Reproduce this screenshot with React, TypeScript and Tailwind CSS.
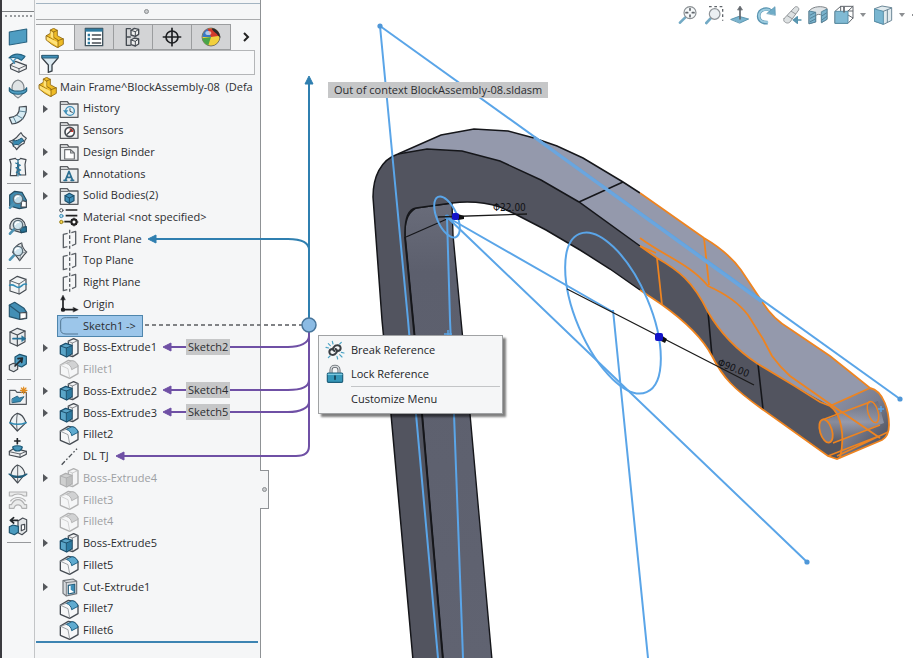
import type { ReactNode } from "react";
import clsx from "clsx";

const INK = "#454b52";
const BLUE = "#3f8fb8";
const PALE = "#b5dbea";

/** Every icon is drawn on a 60-unit grid and shown at 20px. */
function Glyph({ children, faded }: { children: ReactNode; faded?: boolean }) {
  return (
    <svg
      viewBox="0 0 60 60"
      className={clsx("size-5 shrink-0", faded && "opacity-40 grayscale")}
      fill="none"
      stroke={INK}
      strokeWidth={3.5}
      strokeLinejoin="round"
      strokeLinecap="round"
      aria-hidden="true"
    >
      {children}
    </svg>
  );
}

// ---------- feature tree icons ----------

const partIcon = (
  <g stroke="#8a6412" strokeWidth="2.5">
    <path d="M4 23l12-7V6l10-5 11 6v16l18 10v16L38 59 20 49 4 36z" fill="#eebb26" />
    <path d="M16 6l10 6v16l13 8v22M26 12l11-5M39 38l16-6M4 23l22 13" fill="none" />
    <path d="M17 9l8 5v18l-8-5zM6 26l31 16v13L6 36z" fill="#ffe27a" stroke="none" />
  </g>
);

function folder(inner: ReactNode) {
  return (
    <>
      <path d="M4 55V8h21l5 7h27v40z" fill="#eceeef" stroke="#5a5d61" strokeWidth="4" />
      <path d="M5 16h22" stroke="#5a5d61" strokeWidth="3" />
      {inner}
    </>
  );
}

const historyIcon = folder(
  <>
    <circle cx="33" cy="36" r="13" fill="#e4f3f8" stroke={BLUE} strokeWidth="4" />
    <path d="M33 29v8l7 3" strokeWidth="3" />
    <path d="M12 34l8 10 8-10z" fill={BLUE} stroke="none" />
  </>,
);
const sensorsIcon = folder(
  <>
    <circle cx="32" cy="36" r="14" fill="#fff" strokeWidth="5" />
    <path d="M32 36V25a11 11 0 0 1 11 11z" fill="#d5382f" stroke="none" />
    <path d="M24 43l14-13" strokeWidth="4" />
  </>,
);
const binderIcon = folder(
  <path d="M17 23h18l11 10v18H17zM35 23v10h11" fill="#fff" stroke="#6b6e72" strokeWidth="3.5" />,
);
const annotationsIcon = folder(
  <path d="M19 49l11-27 11 27M23 40h14M15 49h8M36 49h8" stroke="#2c6f91" strokeWidth="5" />,
);
const bodiesIcon = folder(
  <>
    <path d="M18 29l13-7 14 7v15l-14 8-13-8z" fill={BLUE} stroke="#1c4f6c" />
    <path d="M18 29l13 7 14-7M31 36v15" stroke="#1c4f6c" strokeWidth="3" />
  </>,
);

const materialIcon = (
  <>
    <circle cx="7" cy="10" r="5" fill="#fff" strokeWidth="3" />
    <circle cx="7" cy="27" r="5" fill={PALE} stroke={BLUE} strokeWidth="3" />
    <circle cx="7" cy="45" r="5" fill="#f5d44b" stroke="#9c8420" strokeWidth="3" />
    <path d="M20 9h35M20 26h35M16 44h18" stroke="#222" strokeWidth="5" strokeLinecap="butt" />
    <circle cx="45" cy="45" r="8" stroke="#222" strokeWidth="6" />
    <path d="M45 33v24M33 45h24M37 37l16 16M53 37L37 53" stroke="#222" strokeWidth="3" />
    <circle cx="45" cy="45" r="4" fill="#fff" stroke="none" />
  </>
);

const planeIcon = (
  <path
    d="M26 13L13 16v40l12-3M37 11l13-4v38l-11 5M32 2v11M32 19v11M32 36v8M32 50v9"
    stroke="#5b6066"
    strokeWidth="4"
    strokeLinecap="butt"
  />
);

const originIcon = (
  <g stroke="#1d1f22" strokeWidth="5">
    <path d="M12 14v33h34" />
    <path d="M5 17l7-14 7 14z M43 40l15 7-15 7z" fill="#1d1f22" strokeWidth="1" />
    <circle cx="12" cy="47" r="4" fill="#1d1f22" />
  </g>
);

const sketchIcon = <path d="M56 5H22C10 5 5 9 5 18v23c0 9 6 13 16 13h35" stroke="#527793" strokeWidth="3" />;

const extrudeIcon = (
  <>
    <path d="M28 9l16-7 13 6v38l-16 10-13-4z" fill="#f2f3f4" strokeWidth="4" />
    <path d="M28 10l12 5v38M40 15l16-7" stroke="#777c82" strokeWidth="2.5" />
    <path d="M4 24l16-8 19 6v25l-16 10-19-9z" fill="#5aa5c8" stroke="#1c4f6c" strokeWidth="4" />
    <path d="M24 31l13-6v20l-13 9z" fill="#2d7ca3" stroke="none" />
    <path d="M4 24l18 6 17-7M22 30v26" stroke="#1c4f6c" strokeWidth="3" />
  </>
);

const filletIcon = (
  <>
    <path d="M4 18L28 4l18 3 11 12v25L32 58 4 46z" fill="#f6f7f8" strokeWidth="4" />
    <path d="M22 13l17-8c9 1 16 7 18 17L38 32c-1-9-6-16-16-19z" fill="#5fabd0" stroke="#1f6286" strokeWidth="3" />
    <path d="M5 19l17-6M5 19l22 10 5 28" stroke="#8b9095" strokeWidth="2.5" />
  </>
);

const cutIcon = (
  <>
    <path d="M12 11l30-5 11 7v37l-31 7-10-8z" fill="#d7dadd" stroke="#70757a" />
    <path d="M22 17l31-4M22 17v39M22 17l-9-6" stroke="#70757a" strokeWidth="2.5" />
    <path d="M28 25l19-3v25l-19 4z" fill="#fff" stroke="#245f7e" />
    <path d="M35 25l10-2v22l-10-7z" fill={BLUE} stroke="none" />
  </>
);

const axisIcon = (
  <path d="M8 56L54 8" stroke="#4c5156" strokeWidth="4" strokeDasharray="14 6 5 6" strokeLinecap="butt" />
);

// ---------- left command bar icons ----------

const magnifier = (
  <>
    <path d="M18 40L6 53" stroke="#4e93b3" strokeWidth="8" />
    <circle cx="30" cy="27" r="14" fill="#cfe5ef" fillOpacity=".9" stroke="#5a6c77" strokeWidth="4" />
    <path d="M22 26c1-5 5-8 10-7" stroke="#fff" strokeWidth="4" />
  </>
);

const commandGroups: { label: string; art: ReactNode; faded?: boolean }[][] = [
  [
    {
      label: "Planar Surface",
      art: <path d="M4 15l52-9v39L4 54z" fill="#4f9dc2" stroke="#2a6482" />,
    },
    {
      label: "Extruded Surface",
      art: (
        <>
          <path d="M7 36l16-11 32 12v10L32 58 8 47z" fill="#eff0f1" />
          <path d="M8 37l25 10 22-10M33 47v10" strokeWidth="2.5" />
          <path d="M3 15C16 1 34 1 51 10c-2 5-6 8-11 12C30 13 18 12 3 15z" fill={BLUE} stroke="#21607f" />
          <path d="M8 17l12 14M26 15c-6 3-9 8-10 14" stroke={BLUE} />
        </>
      ),
    },
    {
      label: "Revolved Surface",
      art: (
        <>
          <path d="M30 3c22 5 26 39 0 54C4 42 8 8 30 3z" fill="#dfe3e5" stroke="#7d8489" />
          <path d="M4 26c5 14 45 14 52 0v10C48 49 12 49 4 36z" fill="#4e9dc1" stroke="#25627f" />
        </>
      ),
    },
    {
      label: "Swept Surface",
      art: (
        <>
          <path d="M34 6l21-2c2 27-13 49-43 53L4 38c22-4 31-12 30-32z" fill="#d7ecf4" />
          <path d="M34 18l21 3M27 31l18 10M16 36l9 18" stroke="#60889b" strokeWidth="3" />
        </>
      ),
    },
    {
      label: "Boundary Surface",
      art: (
        <>
          <path d="M4 31c10-2 20-8 29-20l6-6c3 8 9 13 16 17-5 4-6 9-7 15-9 3-16 10-22 19-2-5-5-8-10-10 2-7-5-11-12-15z" fill="#e9ecee" />
          <path d="M16 29c9 2 17-3 25-8l7 9c-7 1-11 7-17 12-5-4-10-1-15 1z" fill="#388bb2" stroke="#20516b" strokeWidth="3" />
        </>
      ),
    },
    {
      label: "Knit Surface",
      art: (
        <>
          <path d="M5 8l17-4c3 6 13 6 16 0l16 4-3 14 2 32H34l-4-37-4 39H7l2-35z" fill="#f3f5f6" />
          <path d="M23 18l14 7-13 7 14 7-13 7 13 7M30 8v49" stroke="#28769c" />
        </>
      ),
    },
  ],
  [
    {
      label: "Section Inspect",
      art: (
        <>
          <path d="M5 15L20 4l22 3 13 23v22l-21 4-29-8z" fill="#3e8bb0" stroke="#254b60" />
          <path d="M41 31l14 4v16H39z" fill="#fff" />
          {magnifier}
        </>
      ),
    },
    {
      label: "Feature Inspect",
      art: (
        <>
          <path d="M6 38c-5-36 41-43 46-9l3 16-15 5-20-6z" fill="#d8dee1" />
          <path d="M34 35l21-3v15l-15 3z" fill="#287396" stroke="#204c63" />
          {magnifier}
        </>
      ),
    },
    {
      label: "Surface Inspect",
      art: (
        <>
          <path d="M14 31C20 14 30 6 41 3c2 12 6 20 15 27-8 8-15 18-21 26-5-9-12-16-21-25z" fill="#e7ebed" />
          <path d="M41 3c-2 19-2 34-6 52M30 35l26-5" stroke="#7b8287" strokeWidth="2.5" />
          {magnifier}
        </>
      ),
    },
  ],
  [
    {
      label: "Split",
      art: (
        <>
          <path d="M6 17L28 4l26 9v31L34 57 6 48z" fill="#f2f4f5" />
          <path d="M6 17l27 10 21-14M33 27v30" strokeWidth="2.5" />
          <path d="M5 31c12-7 18 8 28 6 9-2 12-14 22-9" stroke="#318bb4" strokeWidth="5" />
        </>
      ),
    },
    {
      label: "Draft",
      art: (
        <>
          <path d="M4 12L20 4l28 18 8 12v18l-21 3-31-8z" fill="#438fb5" stroke="#275770" />
          <path d="M35 36l20-2v17l-20 4z" fill="#fff" />
          <path d="M4 13l31 23M35 36v18" stroke="#275770" />
        </>
      ),
    },
    {
      label: "Move Face",
      art: (
        <>
          <path d="M6 15L28 4l23 8v32L28 57 6 47z" fill="#e9ebed" />
          <path d="M6 15l22 9 23-12M28 24v33" />
          <path d="M15 35h34" stroke="#267197" strokeWidth="5" />
          <path d="M42 27l11 8-11 8z" fill="#267197" stroke="#267197" strokeWidth="2" />
        </>
      ),
    },
    {
      label: "Scale",
      art: (
        <>
          <path d="M21 12L35 4l20 6v23L41 42l-20-7z" fill="#4d9cc1" stroke="#1e536e" />
          <path d="M4 37l12-6 13 5v13l-12 7-13-6z" fill="#dfe3e5" />
          <path d="M21 39l20-20M30 17l13-2-2 13" stroke="#202a30" strokeWidth="5" />
        </>
      ),
    },
  ],
  [
    {
      label: "Surface Folder",
      art: (
        <>
          <path d="M5 55V13h17l5 6h28v36z" fill="#f0f1f2" stroke="#555a5f" />
          <path d="M13 38l15-8 6 6 14-4-11 15-24 3z" fill="#378bb2" stroke="#205a78" strokeWidth="2.5" />
          <path d="M47 3v20M37 13h20M40 6l14 14M54 6L40 20" stroke="#e08a1c" strokeWidth="3.5" />
        </>
      ),
    },
    {
      label: "Freeform",
      art: (
        <>
          <path d="M28 4C13 11 8 22 6 33l22 24 26-25C46 13 41 7 28 4z" fill="#eef2f4" />
          <path d="M28 4c-3 20-3 37 0 53" strokeWidth="2.5" />
          <path d="M6 32c14 6 32 6 48 0" stroke="#318bb4" strokeWidth="5" />
        </>
      ),
    },
    {
      label: "Indent",
      art: (
        <>
          <path d="M4 40l15-9 36 9v9L37 58 4 51z" fill="#eff0f1" />
          <path d="M4 41l32 7 19-8M36 48v9" strokeWidth="2.5" />
          <path d="M14 27c6-5 22-5 29 0-2 8-6 12-14 12s-13-4-15-12z" fill="#4796bb" stroke="#1c5a78" />
          <path d="M28 2v15M20 9h16" stroke="#202428" strokeWidth="5" />
        </>
      ),
    },
    {
      label: "Dome",
      art: (
        <>
          <path d="M28 3c15 4 21 18 23 27L29 57 8 33C12 16 19 8 28 3z" fill="#eef1f2" />
          <path d="M3 30c16 9 37 9 54 0-15 14-40 14-54 0z" fill="#4a9abf" stroke="#205d7b" />
          <path d="M29 4v52" strokeWidth="2.5" />
        </>
      ),
    },
    {
      label: "Flex",
      faded: true,
      art: (
        <>
          <path d="M4 6h52v12h-8C39 10 21 10 12 18H4zM4 55V44h6c10-20 30-20 40 0h6v11H42c-3-14-21-14-24 0z" fill="#d8dadb" />
          <path d="M8 33c12-14 32-14 44 0" />
        </>
      ),
    },
    {
      label: "Replace Body",
      art: (
        <>
          <path d="M30 15l14-9 12 5v34L42 56l-12-6z" fill="#e3e6e8" />
          <path d="M40 27l10-2v15l-10 4z" fill="#fff" />
          <path d="M4 32l11-5 16 4v18l-12 7-15-6z" fill="#4b9bbf" stroke="#1d526d" />
          <path d="M29 13H8M17 5L7 13l10 8" stroke="#22272b" strokeWidth="5" />
        </>
      ),
    },
  ],
];

// ---------- heads-up view icons ----------

type ViewTool = { label: string; art: ReactNode; menu?: boolean };

const viewTools: ViewTool[] = [
  {
    label: "Zoom to Fit",
    art: (
      <>
        <path d="M22 37L6 53" stroke="#5b9cbb" strokeWidth="8" />
        <circle cx="36" cy="23" r="18" fill="#f4f7f8" stroke="#777d82" />
        <path d="M36 11v5M36 30v5M24 23h5M43 23h5" strokeWidth="5" />
      </>
    ),
  },
  {
    label: "Zoom to Area",
    art: (
      <>
        <path d="M15 5h41v42" strokeDasharray="8 8" strokeWidth="4" strokeLinecap="butt" />
        <path d="M22 38L7 54" stroke="#5b9cbb" strokeWidth="8" />
        <circle cx="32" cy="27" r="16" fill="#e9eef1" stroke="#7b8186" />
      </>
    ),
  },
  {
    label: "Normal To",
    art: (
      <>
        <path d="M3 43l24-9 29 8-26 12z" fill="#64a9c8" stroke="#2f7797" strokeWidth="2.5" />
        <path d="M30 42V12" strokeWidth="5" />
        <path d="M23 14l7-11 7 11z" fill={INK} strokeWidth="2" />
      </>
    ),
  },
  {
    label: "Rotate View",
    art: (
      <>
        <path d="M49 24C40 4 8 10 8 34c0 13 12 20 27 19" stroke="#3b81a3" strokeWidth="11" strokeLinecap="butt" />
        <path d="M48 24C40 6 9 12 9 34c0 12 11 18 25 18" stroke="#8ac2da" strokeWidth="6" />
        <path d="M33 25l24-20 1 25z" fill="#579ebe" stroke="#3b81a3" strokeWidth="2" />
      </>
    ),
  },
  {
    label: "Section View",
    art: (
      <>
        <path d="M6 41L38 7c4-5 15 0 12 8L24 51c-7 8-24-1-18-10z" fill="#d8dcde" stroke="#808589" strokeWidth="3" />
        <path d="M16 32l14 9M28 19l13 8" stroke="#808589" strokeWidth="3" />
        <path d="M57 45H40M46 35L34 45l12 10z" fill="#4d9bc0" stroke="#3a819f" strokeWidth="4" />
      </>
    ),
  },
  {
    label: "Dynamic View",
    art: (
      <>
        <path d="M4 17C15 3 43 2 57 10v33l-16 10V31c-4-4-14-4-18 1v19L4 56z" fill="#d9dfe2" stroke="#666c71" strokeWidth="3" />
        <path d="M4 18l19 4v29L4 56zM41 20l16-8v31l-16 9z" fill="#62a5c4" stroke="#38718d" strokeWidth="3" />
        <path d="M7 30l15-8M7 40l15-8M7 50l15-8M43 32l12-8M43 44l12-9" stroke="#2e6079" strokeWidth="2.5" />
      </>
    ),
  },
  {
    label: "View Orientation",
    menu: true,
    art: (
      <>
        <path d="M4 18L20 4h37v35L42 55H4z" fill="#fff" strokeWidth="3" />
        <path d="M42 18L57 4M20 4v14M42 30l15 9M42 18h14" strokeWidth="3" />
        <path d="M4 19h38v36H4z" fill="#6aafcd" stroke="#3b7d9b" strokeWidth="3" />
        <path d="M30 7v14" strokeWidth="5" />
      </>
    ),
  },
  {
    label: "Display Style",
    menu: true,
    art: (
      <>
        <path d="M5 11l22-8 29 5v38l-24 12-27-9z" fill="#dce8ed" stroke="#527284" strokeWidth="3" />
        <path d="M5 12l26 7v39L5 49z" fill="#62aaca" stroke="#3b7d9b" strokeWidth="3" />
        <path d="M31 19l25-10M43 15v37" stroke="#527284" strokeWidth="3" />
      </>
    ),
  },
];

// ---------- tree data ----------

type Feature = { name: string; icon: ReactNode; open?: boolean; faded?: boolean; selected?: boolean };

const features: Feature[] = [
  { name: "History", icon: historyIcon, open: true },
  { name: "Sensors", icon: sensorsIcon },
  { name: "Design Binder", icon: binderIcon, open: true },
  { name: "Annotations", icon: annotationsIcon, open: true },
  { name: "Solid Bodies(2)", icon: bodiesIcon, open: true },
  { name: "Material <not specified>", icon: materialIcon },
  { name: "Front Plane", icon: planeIcon },
  { name: "Top Plane", icon: planeIcon },
  { name: "Right Plane", icon: planeIcon },
  { name: "Origin", icon: originIcon },
  { name: "Sketch1 ->", icon: sketchIcon, selected: true },
  { name: "Boss-Extrude1", icon: extrudeIcon, open: true },
  { name: "Fillet1", icon: filletIcon, faded: true },
  { name: "Boss-Extrude2", icon: extrudeIcon, open: true },
  { name: "Boss-Extrude3", icon: extrudeIcon, open: true },
  { name: "Fillet2", icon: filletIcon },
  { name: "DL TJ", icon: axisIcon },
  { name: "Boss-Extrude4", icon: extrudeIcon, open: true, faded: true },
  { name: "Fillet3", icon: filletIcon, faded: true },
  { name: "Fillet4", icon: filletIcon, faded: true },
  { name: "Boss-Extrude5", icon: extrudeIcon, open: true },
  { name: "Fillet5", icon: filletIcon },
  { name: "Cut-Extrude1", icon: cutIcon, open: true },
  { name: "Fillet7", icon: filletIcon },
  { name: "Fillet6", icon: filletIcon },
];

const tabs: { label: string; art: ReactNode }[] = [
  { label: "FeatureManager", art: partIcon },
  {
    label: "PropertyManager",
    art: (
      <>
        <path d="M4 4h52v52H4z" fill="#fff" stroke="#41535e" strokeWidth="4" />
        <path d="M4 5h52v9H4z" fill="#2f7ba0" stroke="none" />
        <path d="M11 24h7M11 36h7M11 48h7" stroke="#2f7ba0" strokeWidth="7" strokeLinecap="butt" />
        <path d="M25 24h25M25 36h25M25 48h25" strokeWidth="4" />
      </>
    ),
  },
  {
    label: "ConfigurationManager",
    art: (
      <>
        <path d="M10 5h12M10 5v50h12M10 30h12" strokeWidth="4" />
        <path d="M24 10l10-6 13 3v15l-10 6-13-4zM24 39l10-6 13 3v15l-10 6-13-4z" fill="#eee" strokeWidth="4" />
        <path d="M24 10l13 4 10-7M37 14v14M24 39l13 4 10-7M37 43v14" strokeWidth="3" />
      </>
    ),
  },
  {
    label: "DimXpertManager",
    art: (
      <>
        <circle cx="30" cy="30" r="18" stroke="#1d1f22" strokeWidth="5" />
        <path d="M30 4v52M4 30h52" stroke="#1d1f22" strokeWidth="5" />
      </>
    ),
  },
  {
    label: "DisplayManager",
    art: (
      <>
        <circle cx="30" cy="30" r="27" fill="#f2d03d" stroke="#4a4a4a" strokeWidth="2" />
        <path d="M30 30L4 34A27 27 0 0 0 22 55z" fill="#4aa549" stroke="none" />
        <path d="M30 30L8 15A27 27 0 0 1 56 26z" fill="#d23a2c" stroke="none" />
        <path d="M30 30L4 30A27 27 0 0 1 20 6z" fill="#3977c4" stroke="none" />
        <path d="M32 4c15 1 24 12 25 26-6-3-8-9-14-13-5-4-9-6-11-13z" fill="#2b2b2b" stroke="none" />
        <ellipse cx="22" cy="18" rx="9" ry="6" fill="#fff" fillOpacity=".6" stroke="none" />
      </>
    ),
  },
];

function CommandBar() {
  return (
    <nav
      aria-label="Commands"
      className="flex w-[34px] shrink-0 flex-col items-center border-l-2 border-[#3b3b40] bg-[#f6f7f8]"
    >
      <div className="mb-[3px] h-3 w-full border-b border-[#7c7f82]" />
      <div className="mb-[7px] w-[27px] border-t-2 border-dotted border-[#9a9da0]" />
      {commandGroups.map((group, i) => (
        <div key={i} className="flex w-full flex-col items-center">
          {group.map((cmd) => (
            <button key={cmd.label} type="button" aria-label={cmd.label} className="flex h-[26px] items-center">
              <Glyph faded={cmd.faded}>{cmd.art}</Glyph>
            </button>
          ))}
          <div className="my-[3px] ml-[2px] h-px w-6 bg-[#97999c]" />
        </div>
      ))}
    </nav>
  );
}

function FeatureRow({ feature }: { feature: Feature }) {
  return (
    <li className="flex min-h-0 flex-1 items-center pl-1">
      {feature.open ? (
        <button type="button" aria-label={`Expand ${feature.name}`} className="w-3">
          <svg viewBox="0 0 12 12" className="size-3" aria-hidden="true">
            <path d="M3 2l5 4-5 4z" fill="#55585c" />
          </svg>
        </button>
      ) : (
        <span className="w-3" />
      )}
      <button
        type="button"
        className={clsx(
          "ml-[5px] flex h-full items-center gap-1 border pr-[6px] pl-px whitespace-nowrap",
          feature.selected ? "border-[#4f86ad] bg-[#9cc6ea]" : "border-transparent",
          feature.faded ? "text-[#9da0a3]" : "text-[#2b2d30]",
        )}
      >
        <Glyph faded={feature.faded}>{feature.icon}</Glyph>
        {feature.name}
      </button>
    </li>
  );
}

function FeaturePanel() {
  return (
    <aside className="flex w-[227px] shrink-0 flex-col border-r border-l border-r-[#8f9295] border-l-[#c3c5c7] bg-[#f5f6f7] pl-px">
      <div className="h-1 border-b border-[#a3b4c2]" />
      <div className="flex h-4 items-center justify-center border-b border-[#a9abad] pr-1">
        <div className="size-[5px] rounded-full border border-[#8b8e91] bg-[#c8cacc]" />
      </div>
      <div className="mt-1 flex h-[26px]">
        {tabs.map((tab, i) => (
          <button
            key={tab.label}
            type="button"
            aria-label={tab.label}
            className={clsx(
              "flex w-[39px] items-center justify-center border-t border-r border-[#9b9d9f]",
              i === 0 ? "bg-[#f8f9fa]" : "border-b bg-[#d3d4d6]",
            )}
          >
            <Glyph>{tab.art}</Glyph>
          </button>
        ))}
        <button type="button" aria-label="More tabs" className="flex flex-1 items-center justify-center">
          <svg viewBox="0 0 12 12" className="size-3" fill="none" stroke="#222" strokeWidth="2" aria-hidden="true">
            <path d="M4 2l4 4-4 4" />
          </svg>
        </button>
      </div>
      <label className="mr-[5px] ml-[3px] flex h-[25px] items-center border border-[#b4b6b8] bg-[#f8f9fa]">
        <svg viewBox="0 0 60 60" className="size-5 shrink-0" aria-hidden="true">
          <path d="M6 8h48v7L36 36v18l-11 4V36L6 15z" fill="#dceaf1" stroke="#3a4249" strokeWidth="4" />
          <path d="M6 7h48v8H6z" fill="#3f8fb8" stroke="#2b5f7b" strokeWidth="3" />
        </svg>
        <input aria-label="Filter" className="w-full min-w-0 bg-transparent px-1 outline-none" />
      </label>
      <ul className="mt-px mr-[2px] flex h-[567px] flex-col border-b-2 border-[#3d84b2]">
        <li className="flex min-h-0 flex-1 items-center gap-[2px] pl-[2px] whitespace-pre text-[#2b2d30]">
          <Glyph>{partIcon}</Glyph>
          Main Frame^BlockAssembly-08  (Defa
        </li>
        {features.map((f) => (
          <FeatureRow key={f.name} feature={f} />
        ))}
      </ul>
    </aside>
  );
}

/** The bent arm with its driving sketches. */
function Model() {
  return (
    <svg
      viewBox="261 0 652 658"
      preserveAspectRatio="xMinYMin slice"
      className="h-full w-full"
      role="img"
      aria-label="Bent frame with driving sketches"
    >
      <defs>
        <linearGradient id="tip" x1="0" y1="0" x2="1" y2="1">
          <stop offset="0" stopColor="#8f94a8" />
          <stop offset=".5" stopColor="#7a7e90" />
          <stop offset="1" stopColor="#3f414a" />
        </linearGradient>
        <linearGradient id="bore" x1="0" y1="0" x2="0" y2="1">
          <stop offset="0" stopColor="#666a78" />
          <stop offset=".5" stopColor="#a0a4b5" />
          <stop offset="1" stopColor="#5a5d6a" />
        </linearGradient>
        <linearGradient id="column" x1="0" y1="0" x2="0" y2="1">
          <stop offset="0" stopColor="#696c7a" />
          <stop offset=".15" stopColor="#5c5f6d" />
          <stop offset="1" stopColor="#606371" />
        </linearGradient>
      </defs>

      {/* inner column wall */}
      <path
        d="M452 203L416 208Q406 213 405 230L405 237 413 320 422 414 443 660H492L470 414 461 320 453 235z"
        fill="url(#column)"
        stroke="#15161a"
        strokeWidth="1.4"
      />
      <path d="M406 237L447 219" stroke="#15161a" strokeWidth="1.3" />

      {/* top surface */}
      <path
        d="M398 154L441 135 474 129 508 131 534 138 557 146 583 158 623 182 640 193 704 238Q728 252 741 270L763 303Q773 319 790 329L830 356 870 388 832 410 820 402 793 385 758 364Q726 343 708 312C693 281 678 270 657 258L640 246 579 202 541 180 500 161 462 151 427 149z"
        fill="#9499ac"
      />

      {/* rounded tip */}
      <path
        d="M830 406L870 388C884 391 889 412 889 425Q889 436 882 440L837 459 828 456z"
        fill="url(#tip)"
      />

      {/* front face */}
      <path
        d="M398 154C380 160 373 178 373 197L382 320 391 414 413 660H443L422 414 413 320 405 237Q404 210 416 208L452 203Q478 200 500 207L515 214 546 230 580 250 610 269 640 290 661 304Q699 331 712 356C723 378 734 389 762 409L828 456 837 459C848 448 843 416 830 406L793 385 758 364Q726 343 708 312C693 281 678 270 657 258L640 246 579 202 541 180 500 161 462 151 427 149z"
        fill="#52545f"
      />

      <g fill="none" stroke="#15161a" strokeWidth="1.5">
        <path d="M640 193L623 182 583 158 557 146 534 138 508 131 474 129 441 135 398 154C380 160 373 178 373 197L382 320 391 414 413 660" />
        <path d="M398 154L427 149 462 151 500 161 541 180 579 202 640 246" />
        <path d="M579 202L623 182" />
        <path d="M405 237Q404 210 416 208L452 203Q478 200 500 207L515 214 546 230 580 250 610 269 640 290" />
        <path d="M405 237L413 320 422 414 443 660" strokeWidth="2" />
        <path d="M708 312L712 356M758 364L763 409" strokeWidth="1.6" />
      </g>

      {/* highlighted edges */}
      <path d="M824 420L878 401 884 423 833 443z" fill="url(#bore)" opacity=".7" />
      <g fill="none" stroke="#ee8420" strokeWidth="1.8">
        <path d="M640 193L704 238Q728 252 741 270L763 303Q773 319 790 329L830 356 870 388C884 391 889 412 889 425Q889 436 882 440L837 459 828 456 762 409C734 389 723 378 712 356Q699 331 661 304L640 290" />
        <path d="M640 246L657 258C678 270 693 281 708 312Q726 343 758 364L793 385 820 402 830 406C842 414 845 438 840 458" />
        <path d="M640 238C664 256 690 264 708 286Q735 298 748 315L763 339 772 356Q780 367 790 376L830 404 880 438" />
        <path d="M704 238L709 285M657 258L662 305M830 406L870 388M640 246L656 253" />
        <path d="M822 420L870 402M833 443L880 425M828 456L879 436M837 456L888 432" strokeWidth="1.5" />
        <ellipse cx="826" cy="431" rx="6" ry="12" transform="rotate(-17 826 431)" fill="#797d8c" />
        <ellipse cx="873" cy="412" rx="5" ry="11" transform="rotate(-17 873 412)" strokeWidth="1.4" />
      </g>

      {/* sketch geometry */}
      <g fill="none" stroke="#5aa5e8" strokeWidth="2">
        <path d="M380 26L900 399" />
        <path d="M534 137L762 302" stroke="#6aa6df" strokeWidth="3" />
        <path d="M380 26L389 120 408 320 416 414 438 658" />
        <path d="M447 217L450 320 454 414 463 658" />
        <path d="M447 217L807 562M447 217L613 312M613 310L622 400 648 658" />
        <ellipse cx="613" cy="313" rx="86" ry="37" transform="rotate(67 613 313)" />
        <ellipse cx="447" cy="217" rx="22" ry="10" transform="rotate(66 447 217)" />
        <path d="M444 334h8M448 330v8M878 409h6M881 406v6" strokeWidth="1.5" />
      </g>
      <g fill="#4f97d8">
        <circle cx="380" cy="26" r="2.6" />
        <circle cx="900" cy="399" r="2.6" />
        <circle cx="807" cy="562" r="2.6" />
        <circle cx="447" cy="217" r="2.4" />
      </g>

      {/* diameter callouts */}
      <path d="M438 217L527 214M567 289L754 385" stroke="#1a1a1a" strokeWidth="1.3" />
      <path d="M458 214l6 2v3l-6 1zM661 335l6 4-2 4-6-3z" fill="#111" />
      <rect x="452" y="213" width="7" height="7" rx="2" fill="#1414c8" />
      <rect x="655" y="333" width="8" height="8" rx="2" fill="#1414c8" />
      <g fontFamily="'DejaVu Sans Condensed', 'Liberation Sans', sans-serif" fontSize="10" fill="#101114">
        <text x="493" y="211">Φ22.00</text>
        <text x="717" y="365" transform="rotate(22 717 365)">
          Φ90.00
        </text>
      </g>
    </svg>
  );
}

function ViewToolbar() {
  return (
    <div className="absolute top-[5px] right-0 flex items-center" role="toolbar" aria-label="View">
      {viewTools.map((tool) => (
        <div key={tool.label} className="flex items-center">
          <button type="button" aria-label={tool.label} className="mr-[6px] opacity-85">
            <Glyph>{tool.art}</Glyph>
          </button>
          {tool.menu && (
            <button type="button" aria-label={`${tool.label} options`} className="mr-[7px] w-[6px]">
              <svg viewBox="0 0 6 4" className="h-1 w-[6px]" aria-hidden="true">
                <path d="M0 0h6L3 4z" fill="#8c8f92" />
              </svg>
            </button>
          )}
        </div>
      ))}
      <div className="h-[2px] w-px bg-[#8c8f92]" />
    </div>
  );
}

const referenceTags = [
  { name: "Sketch2", at: "top-[339px]" },
  { name: "Sketch4", at: "top-[382px]" },
  { name: "Sketch5", at: "top-[404px]" },
];

/** Parent/child arrows that run from the selected sketch to other features. */
function ReferenceLines() {
  return (
    <div className="pointer-events-none absolute top-0 left-0">
      <svg width="330" height="480" viewBox="0 0 330 480" fill="none" aria-hidden="true">
        <g stroke="#2f7fb0" strokeWidth="2">
          <path d="M309 318V82M309 250C309 242 300 239 288 239H154" />
          <path d="M305 84l4-8 4 8zM156 235l-8 4 8 4z" fill="#2f7fb0" strokeWidth="1" />
        </g>
        <path d="M145 325H302" stroke="#808285" strokeWidth="2" strokeDasharray="4 3" />
        <g stroke="#6f50a5" strokeWidth="2">
          <path d="M309 332V446Q309 456 296 456H122" />
          <path d="M309 336C309 343 300 347 288 347H169M309 380C309 387 300 390 288 390H169M309 402C309 408 300 412 288 412H169" />
          <path
            d="M171 343l-8 4 8 4zM171 386l-8 4 8 4zM171 408l-8 4 8 4zM124 452l-8 4 8 4z"
            fill="#6f50a5"
            strokeWidth="1"
          />
        </g>
        <circle cx="309" cy="325" r="7" fill="#8bbbe4" stroke="#47759b" strokeWidth="1.5" />
      </svg>
      {referenceTags.map((tag) => (
        <span
          key={tag.name}
          className={clsx("absolute left-[186px] bg-[#c6c7c8] px-[2px] leading-4 text-[#2b2d30]", tag.at)}
        >
          {tag.name}
        </span>
      ))}
      <span className="absolute top-[82px] left-[328px] bg-[#c6c7c8] px-[6px] leading-4 whitespace-nowrap text-[#2b2d30]">
        Out of context BlockAssembly-08.sldasm
      </span>
    </div>
  );
}

function ContextMenu() {
  return (
    <div
      role="menu"
      className="absolute top-[335px] left-[318px] w-[185px] border border-[#a0a2a4] bg-[#f5f6f7] py-[2px] text-[#232528] shadow-[3px_3px_2px_rgba(0,0,0,0.5)]"
    >
      <button type="button" role="menuitem" className="flex h-6 w-full items-center gap-[6px] pl-[6px]">
        <Glyph>
          <path
            d="M27 21c4-7 19-8 20 3 0 5-3 8-8 9M33 39c-4 8-19 8-20-3 0-5 3-8 8-9M25 23c-3 5 0 9 4 10M35 37c3-5 0-9-4-10"
            strokeWidth="6"
            stroke="#3a3f44"
          />
          <path
            d="M16 17l-6-6M24 12l-2-8M11 24l-8-2M44 44l7 7M36 49l2 8M49 37l8 2M44 12l5-5M15 48l-5 5"
            stroke="#4ba3c4"
          />
        </Glyph>
        Break Reference
      </button>
      <button type="button" role="menuitem" className="flex h-6 w-full items-center gap-[6px] pl-[6px]">
        <Glyph>
          <path d="M18 28V18c0-15 24-15 24 0v10" stroke="#5d6369" strokeWidth="9" />
          <path d="M18 28V18c0-15 24-15 24 0v10" stroke="#d5d9dc" strokeWidth="4" />
          <rect x="7" y="27" width="46" height="28" rx="3" fill="#3597b9" stroke="#1e5f7b" />
          <path d="M9 31h42" stroke="#7cc8df" />
          <path d="M30 36v10" stroke="#153f52" strokeWidth="5" />
        </Glyph>
        Lock Reference
      </button>
      <div className="mr-[2px] ml-8 border-t border-[#c3c5c7]" />
      <button type="button" role="menuitem" className="flex h-6 w-full items-center pl-8">
        Customize Menu
      </button>
    </div>
  );
}

export default function App() {
  return (
    <div className="relative flex h-screen min-h-[658px] overflow-hidden bg-white font-['Open_Sans','Noto_Sans',sans-serif] text-[11px]">
      <CommandBar />
      <FeaturePanel />
      <main className="relative min-w-0 flex-1">
        <Model />
        <ViewToolbar />
        <button
          type="button"
          aria-label="Collapse panel"
          className="absolute top-[470px] -left-px flex h-[39px] w-[9px] items-center justify-center border border-l-0 border-[#8f9295] bg-[#f5f6f7]"
        >
          <span className="size-[5px] rounded-full border border-[#8b8e91] bg-[#c8cacc]" />
        </button>
      </main>
      <ReferenceLines />
      <ContextMenu />
    </div>
  );
}
